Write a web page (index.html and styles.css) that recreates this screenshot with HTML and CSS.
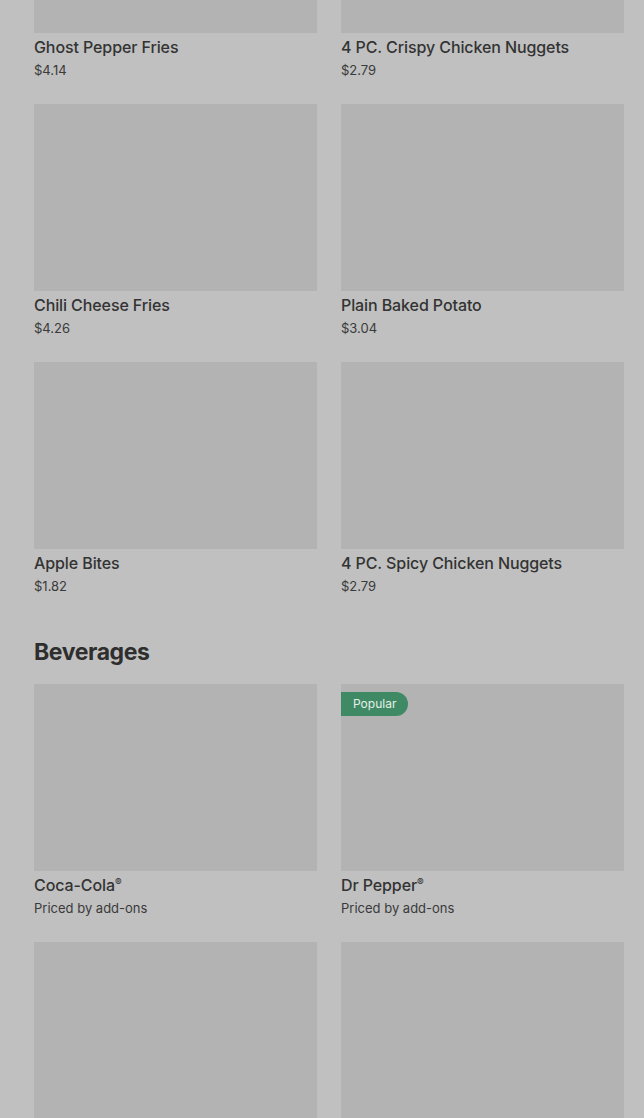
FILE: index.html
```html
<!DOCTYPE html>
<html>
<head>
<meta charset="utf-8">
<link rel="stylesheet" href="styles.css">
</head>
<body>
<div class="page">
  <section class="section first">
    <div class="grid">
      <div class="card"><div class="img"></div><div class="title">Ghost Pepper Fries</div><div class="price">$4.14</div></div>
      <div class="card"><div class="img"></div><div class="title">4 PC. Crispy Chicken Nuggets</div><div class="price">$2.79</div></div>
      <div class="card"><div class="img"></div><div class="title">Chili Cheese Fries</div><div class="price">$4.26</div></div>
      <div class="card"><div class="img"></div><div class="title">Plain Baked Potato</div><div class="price">$3.04</div></div>
      <div class="card"><div class="img"></div><div class="title">Apple Bites</div><div class="price">$1.82</div></div>
      <div class="card"><div class="img"></div><div class="title">4 PC. Spicy Chicken Nuggets</div><div class="price">$2.79</div></div>
    </div>
  </section>
  <section class="section">
    <h2 class="heading">Beverages</h2>
    <div class="grid">
      <div class="card"><div class="img"></div><div class="title">Coca-Cola<span class="reg">®</span></div><div class="price">Priced by add-ons</div></div>
      <div class="card"><div class="img"><span class="badge">Popular</span></div><div class="title">Dr Pepper<span class="reg">®</span></div><div class="price">Priced by add-ons</div></div>
      <div class="card"><div class="img"></div></div>
      <div class="card"><div class="img"></div></div>
    </div>
  </section>
</div>
</body>
</html>
```
FILE: styles.css
```css
html, body {
  margin: 0;
  padding: 0;
  height: 100%;
  background: #c0c0c0;
  overflow: hidden;
}
.page {
  padding: 0 20px 0 34px;
  font-family: Inter, "Noto Sans", sans-serif;
  color: #333;
}
.section.first {
  margin-top: -154px;
}
.grid {
  display: grid;
  grid-template-columns: 283px 283px;
  column-gap: 24px;
}
.card {
  height: 258px;
}
.img {
  position: relative;
  height: 187px;
  background: #b3b3b3;
}
.title {
  margin-top: 4px;
  font-size: 16px;
  line-height: 20px;
  font-weight: 500;
  letter-spacing: -0.1px;
  color: #333;
}
.reg {
  font-size: 10px;
  vertical-align: 5px;
  line-height: 0;
}
.price {
  margin-top: 4px;
  font-size: 13px;
  line-height: 18px;
  color: #3a3a3a;
}
.heading {
  margin: 18px 0 18px;
  font-size: 23px;
  line-height: 28px;
  font-weight: 700;
  color: #2e2e2e;
  letter-spacing: -0.4px;
}
.badge {
  position: absolute;
  left: 0;
  top: 8px;
  height: 24px;
  line-height: 24px;
  padding: 0 12px;
  background: #3f8a64;
  color: #e6efe9;
  font-size: 12px;
  border-radius: 0 12px 12px 0;
}
```
